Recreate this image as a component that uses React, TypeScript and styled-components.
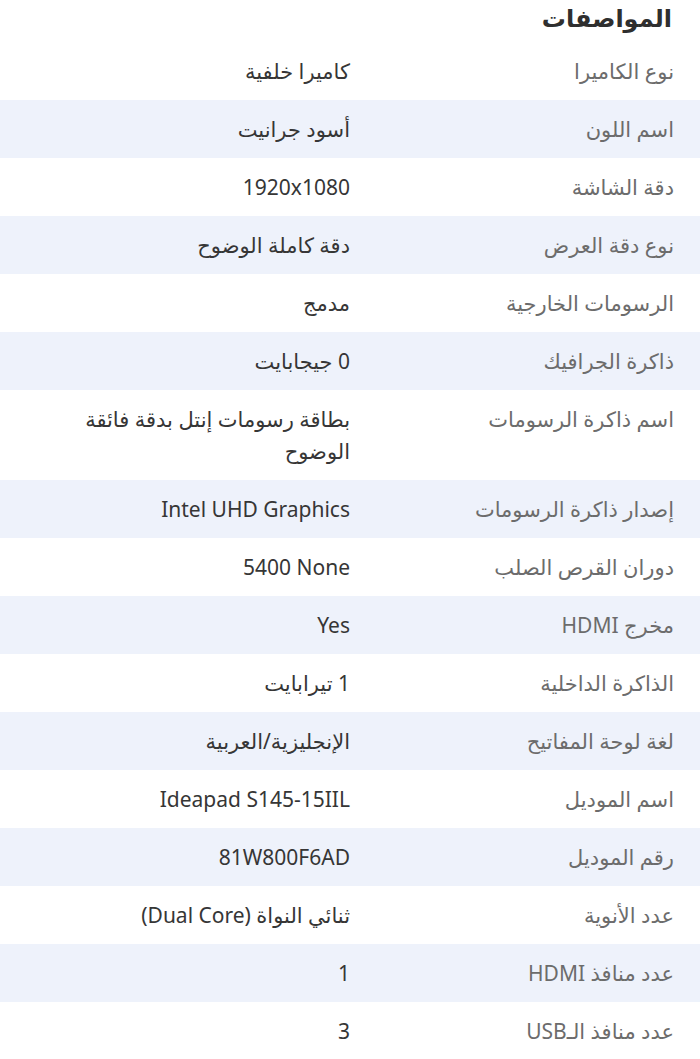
import styled, { createGlobalStyle } from 'styled-components';

interface Spec {
    label: string;
    value: string;
}

const specs: Spec[] = [
    { label: 'نوع الكاميرا', value: 'كاميرا خلفية' },
    { label: 'اسم اللون', value: 'أسود جرانيت' },
    { label: 'دقة الشاشة', value: '1920x1080' },
    { label: 'نوع دقة العرض', value: 'دقة كاملة الوضوح' },
    { label: 'الرسومات الخارجية', value: 'مدمج' },
    { label: 'ذاكرة الجرافيك', value: '0 جيجابايت' },
    { label: 'اسم ذاكرة الرسومات', value: 'بطاقة رسومات إنتل بدقة فائقة الوضوح' },
    { label: 'إصدار ذاكرة الرسومات', value: 'Intel UHD Graphics' },
    { label: 'دوران القرص الصلب', value: '5400 None' },
    { label: 'مخرج HDMI', value: 'Yes' },
    { label: 'الذاكرة الداخلية', value: '1 تيرابايت' },
    { label: 'لغة لوحة المفاتيح', value: 'الإنجليزية/العربية' },
    { label: 'اسم الموديل', value: 'Ideapad S145-15IIL' },
    { label: 'رقم الموديل', value: '81W800F6AD' },
    { label: 'عدد الأنوية', value: 'ثنائي النواة (Dual Core)' },
    { label: 'عدد منافذ HDMI', value: '1' },
    { label: 'عدد منافذ الـUSB', value: '3' },
];

const GlobalStyle = createGlobalStyle`
    body {
        margin: 0;
        background: #ffffff;
        font-family: "Noto Sans", "DejaVu Sans", sans-serif;
    }
`;

const Page = styled.div`
    direction: rtl;
    width: 700px;
    height: 1059px;
    overflow: hidden;
`;

const Heading = styled.h2`
    box-sizing: border-box;
    margin: 0;
    height: 42px;
    padding: 4px 28px 0 0;
    font-size: 24px;
    font-weight: bold;
    line-height: 28px;
    color: #2f2f2f;
`;

/* صف المواصفات: خلفية زرقاء فاتحة بالتناوب */
const Row = styled.div<{ $shaded: boolean }>`
    display: grid;
    grid-template-columns: 350px 1fr;
    background: ${(p) => (p.$shaded ? '#eef2fb' : '#ffffff')};
    padding: 13px 0;
`;

const Label = styled.div`
    padding-right: 26px;
    font-size: 21px;
    line-height: 32px;
    color: #6c6c6c;
`;

const Value = styled.div`
    padding-left: 40px;
    font-size: 21px;
    line-height: 32px;
    color: #363636;
    unicode-bidi: plaintext; /* اتجاه النص حسب أول حرف */
    text-align: right;
`;

const App = () => {
    return (
        <Page>
            <GlobalStyle />
            <Heading>المواصفات</Heading>
            {specs.map((spec, i) => (
                <Row key={spec.label} $shaded={i % 2 === 1}>
                    <Label>{spec.label}</Label>
                    <Value>{spec.value}</Value>
                </Row>
            ))}
        </Page>
    );
};

export default App;
